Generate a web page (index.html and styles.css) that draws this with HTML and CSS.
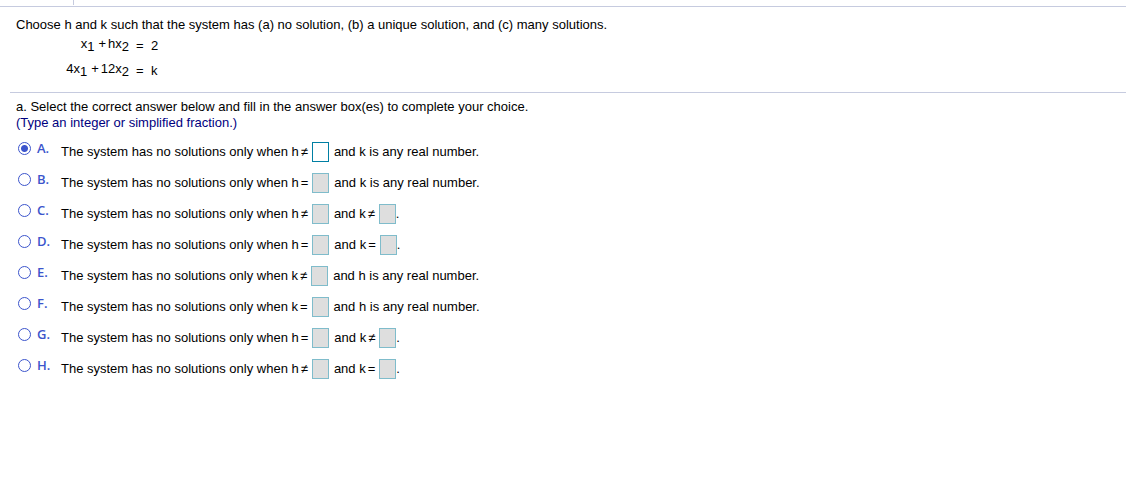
FILE: index.html
```html
<!DOCTYPE html>
<html lang="en">
<head>
<meta charset="utf-8">
<title>Exercise</title>
<link rel="stylesheet" href="styles.css">
</head>
<body>
<header class="topbar"><span class="topbar-cell"></span></header>
<main class="exercise">
  <section class="question">
    <p class="line">Choose h and k such that the system has (a) no solution, (b) a unique solution, and (c) many solutions.</p>
    <div class="system">
      <span class="lhs">x<sub>1</sub><span class="plus">+</span>hx<sub>2</sub></span><span class="rhs">=</span><span class="rhs">2</span>
      <span class="lhs">4x<sub>1</sub><span class="plus">+</span>12x<sub>2</sub></span><span class="rhs">=</span><span class="rhs">k</span>
    </div>
  </section>
  <form class="answer">
    <p class="line">a. Select the correct answer below and fill in the answer box(es) to complete your choice.</p>
    <p class="line hint">(Type an integer or simplified fraction.)</p>
    <div class="choices">
      <div class="choice">
        <label class="pick"><input class="radio" type="radio" name="choice" checked><span>A.</span></label>
        <div class="statement"><span>The system has no solutions only when h</span><span class="rel">≠</span><input class="box" type="text" aria-label="A: value of h"><span class="after">and k is any real number.</span></div>
      </div>
      <div class="choice">
        <label class="pick"><input class="radio" type="radio" name="choice"><span>B.</span></label>
        <div class="statement"><span>The system has no solutions only when h</span><span class="rel">=</span><input class="box" type="text" aria-label="B: value of h" disabled><span class="after">and k is any real number.</span></div>
      </div>
      <div class="choice">
        <label class="pick"><input class="radio" type="radio" name="choice"><span>C.</span></label>
        <div class="statement"><span>The system has no solutions only when h</span><span class="rel">≠</span><input class="box" type="text" aria-label="C: value of h" disabled><span class="after">and k</span><span class="rel">≠</span><input class="box" type="text" aria-label="C: value of k" disabled><span>.</span></div>
      </div>
      <div class="choice">
        <label class="pick"><input class="radio" type="radio" name="choice"><span>D.</span></label>
        <div class="statement"><span>The system has no solutions only when h</span><span class="rel">=</span><input class="box" type="text" aria-label="D: value of h" disabled><span class="after">and k</span><span class="rel">=</span><input class="box" type="text" aria-label="D: value of k" disabled><span>.</span></div>
      </div>
      <div class="choice">
        <label class="pick"><input class="radio" type="radio" name="choice"><span>E.</span></label>
        <div class="statement"><span>The system has no solutions only when k</span><span class="rel">≠</span><input class="box" type="text" aria-label="E: value of k" disabled><span class="after">and h is any real number.</span></div>
      </div>
      <div class="choice">
        <label class="pick"><input class="radio" type="radio" name="choice"><span>F.</span></label>
        <div class="statement"><span>The system has no solutions only when k</span><span class="rel">=</span><input class="box" type="text" aria-label="F: value of k" disabled><span class="after">and h is any real number.</span></div>
      </div>
      <div class="choice">
        <label class="pick"><input class="radio" type="radio" name="choice"><span>G.</span></label>
        <div class="statement"><span>The system has no solutions only when h</span><span class="rel">=</span><input class="box" type="text" aria-label="G: value of h" disabled><span class="after">and k</span><span class="rel">≠</span><input class="box" type="text" aria-label="G: value of k" disabled><span>.</span></div>
      </div>
      <div class="choice">
        <label class="pick"><input class="radio" type="radio" name="choice"><span>H.</span></label>
        <div class="statement"><span>The system has no solutions only when h</span><span class="rel">≠</span><input class="box" type="text" aria-label="H: value of h" disabled><span class="after">and k</span><span class="rel">=</span><input class="box" type="text" aria-label="H: value of k" disabled><span>.</span></div>
      </div>
    </div>
  </form>
</main>
</body>
</html>
```

FILE: styles.css
```css
* { box-sizing: border-box; }

body {
  margin: 0;
  background: #fff;
  color: #000;
  font: 13px/16px "Liberation Sans", Arial, sans-serif;
}

.topbar {
  display: flex;
  height: 7px;
  padding-left: 73px;
  border-bottom: 1px solid #c6cbdf;
}

.topbar-cell {
  height: 5px;
  border-left: 1px solid #c6cbdf;
}

.exercise { padding-left: 10px; }

.question {
  padding: 10px 6px 9px;
  border-bottom: 1px solid #c6cbdf;
}

.line { margin: 0; }

.system {
  display: grid;
  grid-template-columns: 113px 8px auto;
  column-gap: 7px;
  justify-content: start;
  line-height: 24px;
}

.lhs {
  line-height: 22px;
  text-align: right;
}

.rhs { padding-top: 1px; }

.plus { padding: 0 2px 0 4px; }

sub {
  font-size: 13px;
  line-height: 0;
  vertical-align: -3px;
}

.answer { padding: 6px; }

.hint { color: #000080; }

.choices { padding-top: 5px; }

.choice {
  display: flex;
  height: 31px;
}

.pick {
  display: flex;
  align-items: center;
  gap: 6px;
  width: 45px;
  height: 25px;
  padding-left: 2px;
  color: #3c55cc;
  font: 600 13px/16px "Open Sans", "Noto Sans", sans-serif;
}

.pick span { padding-bottom: 1px; }

.radio {
  appearance: none;
  width: 13px;
  height: 13px;
  margin: 0;
  border: 1px solid #3c55cc;
  border-radius: 50%;
}

.radio:checked {
  background: radial-gradient(circle, #3c55cc 3px, #fff 4px);
}

.statement {
  display: flex;
  align-items: center;
  height: 31px;
  white-space: nowrap;
}

.rel { padding: 0 4px 0 2px; }

.box {
  width: 17px;
  height: 20px;
  margin: 0;
  padding: 0 2px;
  border: 1px solid #007fa3;
  background: #fff;
  font: inherit;
}

.box:disabled {
  border-color: #7fbccb;
  background: #dedede;
}

.after { padding-left: 5px; }
```
